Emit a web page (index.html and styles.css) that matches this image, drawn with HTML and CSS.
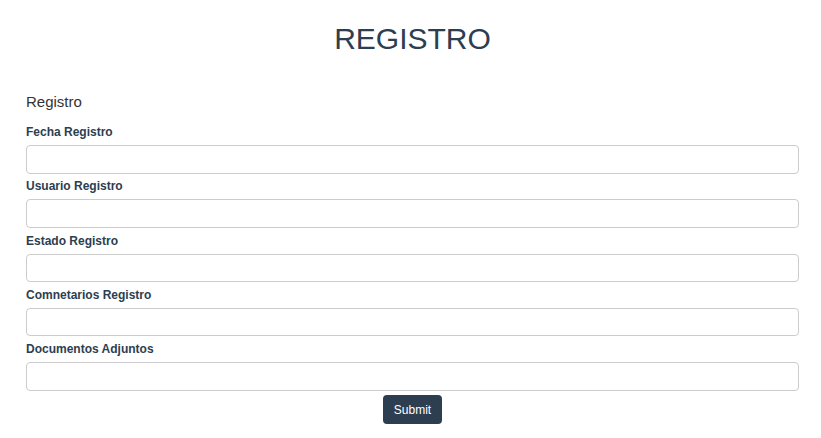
FILE: index.html
```html
<!DOCTYPE html>
<html lang="es">
<head>
<meta charset="utf-8">
<title>Registro</title>
<link rel="stylesheet" href="styles.css">
</head>
<body>
<div class="page">
  <h1 class="title">REGISTRO</h1>
  <form class="form">
    <div class="legend">Registro</div>
    <div class="group">
      <label class="label">Fecha Registro</label>
      <input class="input" type="text">
    </div>
    <div class="group">
      <label class="label">Usuario Registro</label>
      <input class="input" type="text">
    </div>
    <div class="group">
      <label class="label">Estado Registro</label>
      <input class="input" type="text">
    </div>
    <div class="group">
      <label class="label">Comnetarios Registro</label>
      <input class="input" type="text">
    </div>
    <div class="group">
      <label class="label">Documentos Adjuntos</label>
      <input class="input" type="text">
    </div>
    <div class="actions">
      <button class="btn" type="button">Submit</button>
    </div>
  </form>
</div>
</body>
</html>
```
FILE: styles.css
```css
html, body {
  margin: 0;
  padding: 0;
  background: #ffffff;
}
body {
  font-family: "Liberation Sans", Arial, sans-serif;
  color: #2c3e50;
}
.page {
  padding: 0 22px 0 26px;
}
.title {
  margin: 22px 0 0 0;
  font-size: 30px;
  line-height: 34px;
  font-weight: normal;
  text-align: center;
  color: #2c3e50;
}
.form {
  display: flex;
  flex-direction: column;
  margin-top: 37px;
}
.legend {
  font-size: 15px;
  line-height: 17px;
  color: #333333;
  margin-bottom: 14px;
}
.group {
  display: flex;
  flex-direction: column;
  margin-bottom: 4.75px;
}
.label {
  font-size: 12px;
  line-height: 17px;
  font-weight: bold;
  color: #2c3e50;
  margin-bottom: 4px;
}
.input {
  box-sizing: border-box;
  height: 28.5px;
  width: 100%;
  margin: 0;
  border: 1px solid #cccccc;
  border-radius: 4px;
  background: #ffffff;
  padding: 4px 8px;
  font-family: inherit;
  font-size: 12px;
}
.actions {
  display: flex;
  justify-content: center;
  padding-top: 0;
}
.btn {
  box-sizing: border-box;
  width: 59px;
  height: 29px;
  border: none;
  border-radius: 4px;
  background: #2c3e50;
  color: #ffffff;
  font-family: inherit;
  font-size: 12px;
  padding: 0;
}
```
